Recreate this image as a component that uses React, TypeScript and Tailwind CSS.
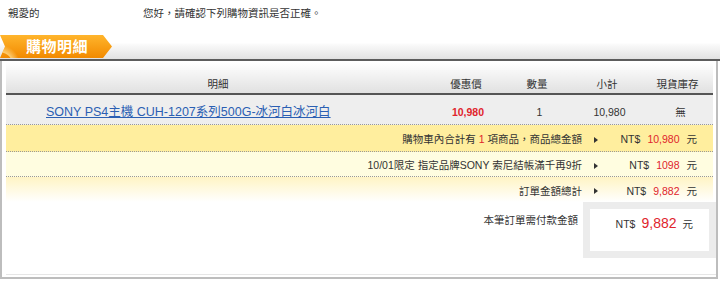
const Arrow = () => (
  <svg width="4" height="6" viewBox="0 0 4 6" className="block">
    <path d="M0 0 L4 3 L0 6 Z" fill="#333" />
  </svg>
);

const Amount = ({ value }: { value: string }) => (
  <div className="w-[103px] pr-[16px] flex justify-end items-baseline gap-[7px]">
    <span>NT$</span>
    <span className="text-[#e0242c]">{value}</span>
    <span>元</span>
  </div>
);

export default function App() {
  return (
    <div className="w-[720px] h-[282px] bg-white text-[10.5px] leading-none text-[#333] font-['Liberation_Sans','Noto_Sans_CJK_TC',sans-serif]">
      {/* greeting */}
      <div className="h-[26px] flex items-center">
        <span className="w-[143px] pl-[8px]">親愛的</span>
        <span>您好，請確認下列購物資訊是否正確。</span>
      </div>

      {/* tab bar */}
      <div className="h-[33px] pt-[9px] bg-[linear-gradient(to_bottom,#fff_0,#fff_17px,#fbfbfb_18px,#e2e2e2_100%)]">
        <div className="w-[112px] h-[23px] flex items-center pl-[26px] text-white text-[15px] font-bold tracking-[0.5px] [clip-path:polygon(0_0,103px_0,112px_50%,103px_100%,0_100%,5px_50%)] bg-[radial-gradient(circle_at_0_130%,transparent_12px,rgba(255,214,130,0.85)_13px,rgba(255,214,130,0)_20px),linear-gradient(to_bottom,#ffb52c,#f28a00)]">
          購物明細
        </div>
      </div>
      <div className="h-[2px] bg-[#5c5c5c]" />

      {/* main box */}
      <div className="w-[718px] border-l-2 border-r-2 border-b-2 border-[#bdbdbd] pl-[4px] pt-[1px]">
        <div className="w-[707px]">
          {/* header */}
          <div className="h-[33px] grid grid-cols-[424px_72px_70px_70px_71px] items-end pb-[4px] text-center border-b-2 border-[#555] bg-[linear-gradient(to_bottom,#fff,#e1e1e1)]">
            <span>明細</span>
            <span>優惠價</span>
            <span>數量</span>
            <span>小計</span>
            <span>現貨庫存</span>
          </div>

          {/* product */}
          <div className="h-[30px] pt-[6px] grid grid-cols-[424px_72px_70px_70px_71px] items-center text-center bg-[#eeeeee] border-b border-dotted border-[#999]">
            <a href="#" className="text-left pl-[40px] text-[12.5px] text-[#2b5fb3] underline">
              SONY PS4主機 CUH-1207系列500G-冰河白冰河白
            </a>
            <span className="text-[#e0242c] font-bold pl-[4px]">10,980</span>
            <span className="pl-[5px]">1</span>
            <span className="pl-[5px]">10,980</span>
            <span className="pl-[6px]">無</span>
          </div>

          {/* summary rows */}
          <div className="h-[27px] pt-[3px] flex justify-end items-center bg-[#ffee9e] border-b border-dotted border-[#999]">
            <span>
              購物車內合計有 <span className="text-[#e0242c]">1</span> 項商品，商品總金額
            </span>
            <div className="w-[28px] flex justify-center"><Arrow /></div>
            <Amount value="10,980" />
          </div>
          <div className="h-[25px] pt-[3px] flex justify-end items-center bg-[#fffde0] border-b border-dotted border-[#999]">
            <span>10/01限定 指定品牌SONY 索尼結帳滿千再9折</span>
            <div className="w-[28px] flex justify-center"><Arrow /></div>
            <Amount value="1098" />
          </div>
          <div className="h-[25px] pt-[3px] flex justify-end items-center bg-[linear-gradient(to_bottom,#fff4c4,#fff)]">
            <span>訂單金額總計</span>
            <div className="w-[28px] flex justify-center"><Arrow /></div>
            <Amount value="9,882" />
          </div>
        </div>

        {/* payable total */}
        <div className="h-[56px] flex justify-end items-start">
          <span className="mt-[13px] mr-[5px]">本筆訂單需付款金額</span>
          <div className="w-[133px] h-[56px] border-[7px] border-[#ececec] bg-white flex justify-end items-baseline gap-[6px] pr-[16px] pt-[7px]">
            <span>NT$</span>
            <span className="text-[#e0242c] text-[14px]">9,882</span>
            <span>元</span>
          </div>
        </div>
        <div className="h-[17px] border-b border-[#e6e6e6]" />
        <div className="h-[2px]" />
      </div>
    </div>
  );
}
